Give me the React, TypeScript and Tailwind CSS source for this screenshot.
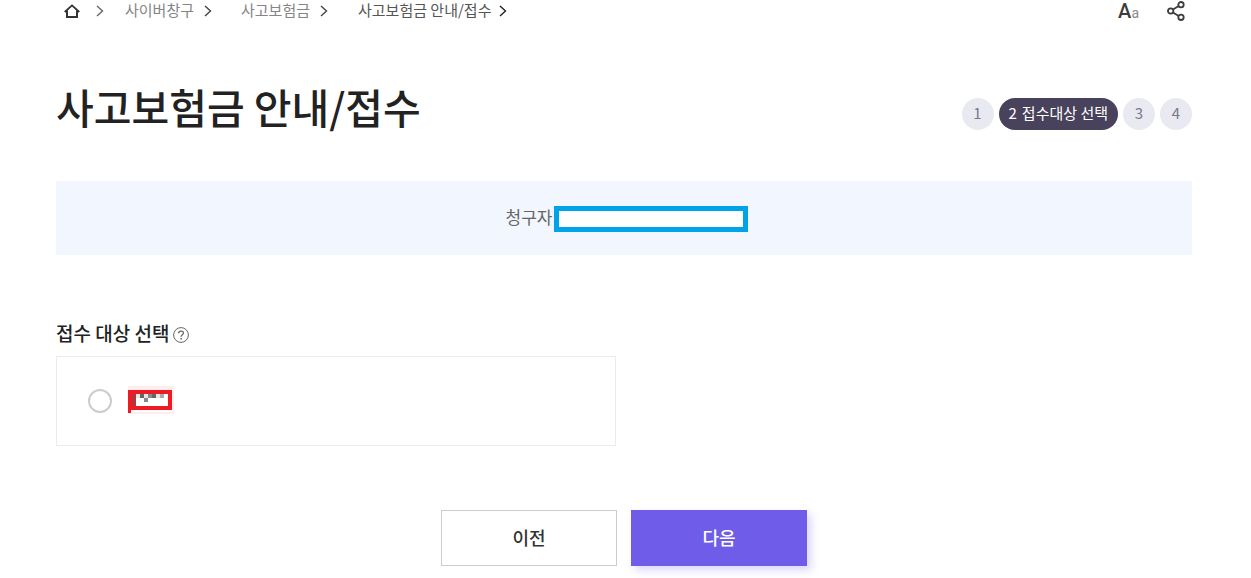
const trail = [
  { label: "사이버창구", item: "w-[116px] gap-2.5", text: "text-[#858585]", arrow: "text-[#444]" },
  { label: "사고보험금", item: "w-[117px] gap-2.5", text: "text-[#858585]", arrow: "text-[#444]" },
  { label: "사고보험금 안내/접수", item: "gap-2", text: "text-[#555]", arrow: "text-[#222]" },
];

function Chevron({ className }: { className: string }) {
  return (
    <svg className={className} width="8" height="12" viewBox="0 0 8 12" fill="none" stroke="currentColor" strokeWidth="1.4" aria-hidden="true">
      <path d="M1 1l5.5 5L1 11" />
    </svg>
  );
}

function HomeIcon() {
  return (
    <svg width="16" height="14" viewBox="0 0 16 14" fill="none" stroke="#333" strokeWidth="2" aria-hidden="true">
      <path d="M0.7 8L8 1.4L15.3 8" strokeWidth="1.8" />
      <path d="M3 6.5V13H13V6.5" />
    </svg>
  );
}

function ShareIcon() {
  return (
    <svg width="18" height="20" viewBox="0 0 18 20" fill="none" stroke="#3c3c3c" strokeWidth="1.8" aria-hidden="true">
      <circle cx="3.7" cy="10" r="2.7" />
      <circle cx="14" cy="3.7" r="2.7" />
      <circle cx="14" cy="16.3" r="2.7" />
      <path d="M6 8.6L11.7 5.1M6 11.4L11.7 14.9" />
    </svg>
  );
}

function HelpIcon() {
  return (
    <svg width="16" height="16" viewBox="0 0 16 16" fill="none" stroke="#666" strokeWidth="1" aria-hidden="true">
      <circle cx="8" cy="8" r="7.4" />
      <path d="M5.6 6.3C5.6 3.3 10.5 3.4 10.5 6.1C10.5 7.8 8.1 7.8 8.1 9.8" strokeWidth="1.3" />
      <path d="M8.1 11v1.5" strokeWidth="1.5" />
    </svg>
  );
}

function MaskedName() {
  return (
    <svg width="46" height="30" viewBox="0 0 46 30" shapeRendering="crispEdges" aria-hidden="true">
      <path fill="#ffecee" d="M0 0h46v28H0z" />
      <path fill="#ed1c24" d="M0 4h44v20H3v3H0z" />
      <path fill="#fff" d="M8 8h32v12H8z" />
      <path fill="#b5343a" d="M4 8h4v12H4z" />
      <path fill="#fff" d="M3 24h41v2H3z" />
      <path fill="#666" d="M12 8h4v4h-4zM24 8h4v4h-4z" />
      <path fill="#888" d="M16 12h4v4h-4zM20 8h4v4h-4z" />
      <path fill="#aaa" d="M32 8h4v4h-4z" />
      <path fill="#e6e6e6" d="M8 8h4v4H8zM16 8h4v4h-4zM28 8h4v4h-4z" />
    </svg>
  );
}

export default function App() {
  return (
    <div className="bg-white pr-[59px] pb-3 pl-14 font-['Noto_Sans_CJK_KR','Noto_Sans',sans-serif] text-[#222]">
      <header className="flex h-[22px] items-center justify-between pl-2">
        <nav aria-label="현재 위치" className="flex items-center text-[15px] leading-5">
          <a href="#home" aria-label="홈" className="flex w-[61px] items-center gap-4">
            <HomeIcon />
            <Chevron className="text-[#666]" />
          </a>
          {trail.map((t) => (
            <a key={t.label} href="#menu" className={`flex items-center whitespace-nowrap ${t.item} ${t.text}`}>
              <span className="pb-0.5">{t.label}</span>
              <Chevron className={t.arrow} />
            </a>
          ))}
        </nav>
        <div className="flex items-center gap-7 pr-[7px]">
          <button type="button" aria-label="글자 크기" className="flex items-baseline pt-0.5 font-[Roboto,sans-serif] leading-[22px]">
            <span className="text-xl leading-[22px] font-medium text-[#3c3c3c]">A</span>
            <span className="text-sm leading-[22px] text-[#888]">a</span>
          </button>
          <button type="button" aria-label="공유">
            <ShareIcon />
          </button>
        </div>
      </header>

      <main>
        <div className="mt-[54px] flex items-center justify-between">
          <h1 className="text-[41px] leading-[60px] font-medium">사고보험금 안내/접수</h1>
          <ol className="mt-4 flex items-center gap-[5px] text-[15px] leading-[30px] text-[#77788a]">
            <li className="w-8 rounded-full bg-[#e9eaf1] pb-0.5 text-center">1</li>
            <li aria-current="step" className="flex gap-[5px] rounded-full bg-[#48425c] px-2.5 pb-0.5 text-white">
              <span>2</span>
              <span>접수대상 선택</span>
            </li>
            <li className="w-8 rounded-full bg-[#e9eaf1] pb-0.5 text-center">3</li>
            <li className="w-8 rounded-full bg-[#e9eaf1] pb-0.5 text-center">4</li>
          </ol>
        </div>

        <div className="mt-[45px] flex h-[74px] items-center justify-center gap-0.5 bg-[#f1f6ff] pt-0.5 pl-1.5 text-[17px] text-[#666]">
          <label htmlFor="claimant" className="pb-1">청구자</label>
          <input id="claimant" readOnly className="h-[26px] w-[194px] border-[5px] border-[#00a2e8] bg-white outline-none" />
        </div>

        <section className="mt-16">
          <div className="flex items-center gap-1">
            <h2 className="text-[19px] leading-7 font-medium">접수 대상 선택</h2>
            <button type="button" aria-label="도움말" className="mt-1">
              <HelpIcon />
            </button>
          </div>
          <div className="mt-[9px] flex h-[90px] w-[560px] max-w-full items-center border border-[#ebebeb] px-[31px]">
            <label className="flex items-center gap-4">
              <input type="radio" name="target" aria-label="접수 대상" className="size-6 appearance-none rounded-full border-2 border-[#ccc] bg-white" />
              <MaskedName />
            </label>
          </div>
        </section>

        <div className="mt-16 flex justify-center gap-3.5 text-lg font-medium">
          <button type="button" className="h-14 w-44 border border-[#ccc] bg-white pb-0.5 text-[#333]">이전</button>
          <button type="button" className="h-14 w-44 bg-[#6f5ce9] pb-0.5 text-white shadow-[4px_4px_8px_rgba(111,92,233,0.25)]">다음</button>
        </div>
      </main>
    </div>
  );
}
